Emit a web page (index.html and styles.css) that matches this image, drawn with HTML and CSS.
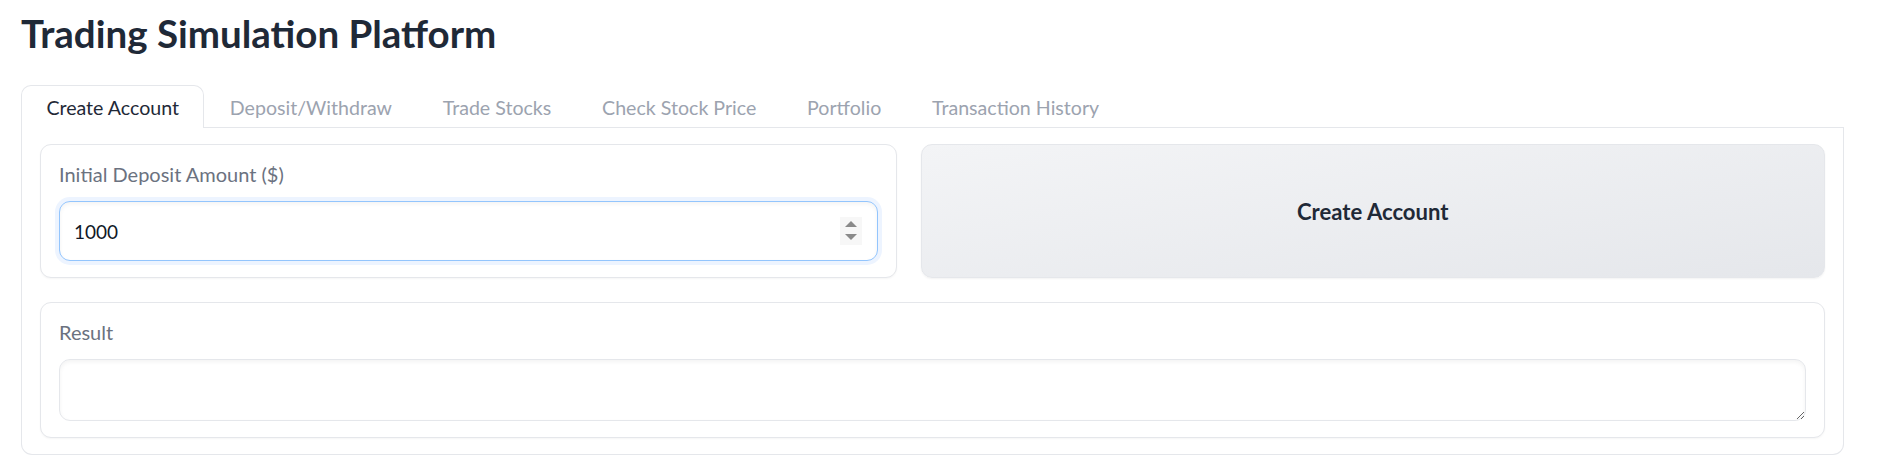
FILE: index.html
```html
<!DOCTYPE html>
<html lang="en">
<head>
<meta charset="utf-8">
<title>Trading Simulation Platform</title>
<link rel="stylesheet" href="styles.css">
</head>
<body>
<div class="app">
  <h1 class="title">Trading Simulation Platform</h1>
  <div class="tabs">
    <div class="tab-nav">
      <div class="tab selected">Create Account</div>
      <div class="tab">Deposit/Withdraw</div>
      <div class="tab">Trade Stocks</div>
      <div class="tab">Check Stock Price</div>
      <div class="tab">Portfolio</div>
      <div class="tab">Transaction History</div>
    </div>
    <div class="tab-panel">
      <div class="row">
        <div class="block">
          <label class="block-label">Initial Deposit Amount ($)</label>
          <div class="input-box focused">
            <input class="input" type="text" value="1000">
            <svg class="spinner" width="22" height="28" viewBox="0 0 22 28">
              <rect x="0" y="0" width="22" height="28" fill="#f7f7f7"/>
              <polygon points="5,10 11,4 17,10" fill="#8a8a8a"/>
              <polygon points="5,17 17,17 11,23" fill="#8a8a8a"/>
            </svg>
          </div>
        </div>
        <button class="btn-secondary">Create Account</button>
      </div>
      <div class="block">
        <label class="block-label">Result</label>
        <textarea class="textarea"></textarea>
      </div>
    </div>
  </div>
</div>
</body>
</html>
```

FILE: styles.css
```css
* { box-sizing: border-box; }
body {
  margin: 0;
  background: #ffffff;
  font-family: Lato, "Noto Sans", sans-serif;
  color: #1f2937;
}
.app {
  padding: 11px 34px 0 21px;
}
.title {
  margin: 0 0 30px 0;
  font-size: 38.5px;
  line-height: 44px;
  font-weight: 700;
  color: #1f2937;
}
.tab-nav {
  display: flex;
  align-items: flex-start;
  border-bottom: 1px solid #e5e7eb;
}
.tab {
  height: 43px;
  margin-bottom: -1px;
  padding: 10px 24.4px 0 24.4px;
  border: 1px solid transparent;
  border-bottom: none;
  border-radius: 10px 10px 0 0;
  font-size: 19.6px;
  line-height: 24px;
  color: #9ca3af;
  white-space: nowrap;
}
.tab.selected {
  background: #ffffff;
  border-color: #e5e7eb;
  color: #1f2937;
}
.tab-panel {
  border: 1px solid #e5e7eb;
  border-top: none;
  border-radius: 0 0 11px 11px;
  padding: 16px 18px;
}
.row {
  display: grid;
  grid-template-columns: 857fr 905fr;
  gap: 24px;
  margin-bottom: 24px;
}
.block {
  border: 1px solid #e5e7eb;
  border-radius: 11px;
  background: #ffffff;
  padding: 17px 18px 16px 18px;
  box-shadow: 0 1px 2px rgba(0, 0, 0, 0.04);
}
.block-label {
  display: block;
  font-size: 20px;
  line-height: 24px;
  color: #6b7280;
  margin-bottom: 15px;
}
.input-box {
  display: flex;
  align-items: center;
  height: 60px;
  border: 1px solid #e5e7eb;
  border-radius: 11px;
  padding: 0 15px 0 14px;
  background: #ffffff;
}
.input-box.focused {
  border-color: #93c5fd;
  box-shadow: 0 0 0 4px #edf4ff, inset 0 2px 4px rgba(0, 0, 0, 0.05);
}
.input {
  flex: 1;
  min-width: 0;
  border: none;
  outline: none;
  background: transparent;
  padding: 0;
  font-family: inherit;
  font-size: 19px;
  color: #111827;
}
.spinner {
  flex: none;
  display: block;
}
.btn-secondary {
  border: 1px solid #e5e7eb;
  border-radius: 11px;
  background: linear-gradient(to bottom right, #f3f4f6, #e5e7eb);
  font-family: inherit;
  font-size: 22.1px;
  font-weight: 700;
  color: #1f2937;
  box-shadow: 0 1px 2px rgba(0, 0, 0, 0.05);
  cursor: pointer;
}
.textarea {
  display: block;
  width: 100%;
  height: 62px;
  border: 1px solid #e5e7eb;
  border-radius: 11px;
  box-shadow: inset 0 2px 4px rgba(0, 0, 0, 0.05);
  resize: vertical;
  font-family: inherit;
  font-size: 20px;
  padding: 12px 14px;
  outline: none;
}
```
